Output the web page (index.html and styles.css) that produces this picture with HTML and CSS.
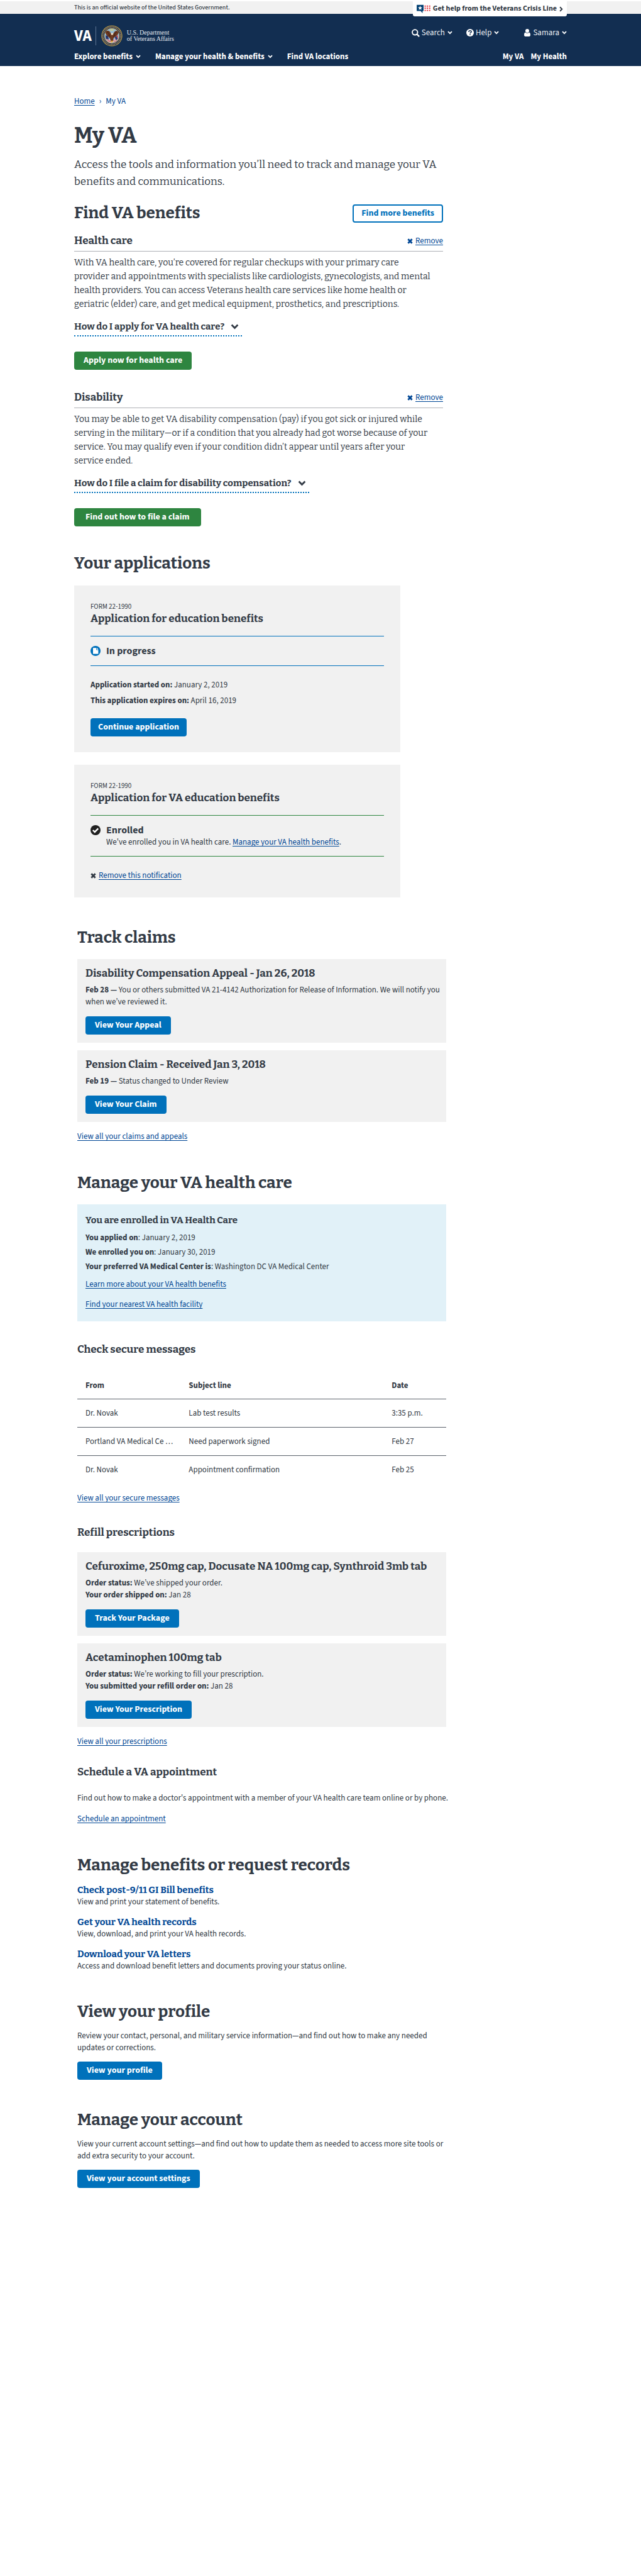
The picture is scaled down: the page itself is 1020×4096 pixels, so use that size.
FILE: index.html
```html
<!DOCTYPE html>
<html lang="en">
<head>
<meta charset="utf-8">
<meta name="viewport" content="width=device-width, initial-scale=1">
<title>My VA</title>
<link rel="stylesheet" href="styles.css">
</head>
<body>
<svg class="sprite" aria-hidden="true">
  <symbol id="chevron" viewBox="0 0 10 7"><path d="M1.200 1.200 5 5l3.800-3.800" fill="none" stroke="currentColor" stroke-width="2.200"/></symbol>
  <symbol id="times" viewBox="0 0 10 10"><path d="M1.500 1.500l7 7M8.500 1.500l-7 7" fill="none" stroke="currentColor" stroke-width="3.200"/></symbol>
</svg>

<div class="gov">
  <div class="wrap gov__inner">
    <span>This is an official website of the United States Government.</span>
    <a class="crisis" href="#crisis">
      <svg class="crisis__icon" viewBox="0 0 28 18" aria-hidden="true">
        <path d="M0 1h14v12.500h-2V18l-4-4.500H0z" fill="#003f72"/>
        <path d="M7 2.800l1.200 3.100 3.300.2-2.600 2.100.9 3.200L7 9.600l-2.800 1.800.9-3.200-2.600-2.100 3.300-.2z" fill="#fff"/>
        <path d="M16 2.200h2.600v2.600H16zm4.600 0h2.600v2.600h-2.600zm4.600 0h2.600v2.600h-2.600zM16 6.500h2.600v2.600H16zm4.600 0h2.600v2.600h-2.600zm4.600 0h2.600v2.600h-2.600zM16 10.800h2.600v2.600H16zm4.600 0h2.600v2.600h-2.600zm4.600 0h2.600v2.600h-2.600z" fill="#e0323c"/>
      </svg>
      Get help from the Veterans Crisis Line
      <svg class="crisis__arrow" viewBox="0 0 7 10" aria-hidden="true"><path d="M1.300 1.200 5 5 1.300 8.800" fill="none" stroke="currentColor" stroke-width="2.200"/></svg>
    </a>
  </div>
</div>

<header class="header">
  <div class="wrap">
    <div class="header__top">
      <a class="logo" href="#home">
        <span class="logo__va">VA</span>
        <svg class="logo__seal" viewBox="0 0 44 44" aria-hidden="true">
          <circle cx="22" cy="22" r="21.500" fill="#c9a545"/>
          <circle cx="22" cy="22" r="20" fill="#1c2a58"/>
          <circle cx="22" cy="22" r="18" fill="none" stroke="#c8a850" stroke-width="2" stroke-dasharray="1.800 1.300"/>
          <circle cx="22" cy="22" r="15.700" fill="#d4b04c"/>
          <circle cx="22" cy="22" r="14.800" fill="#8dbbe0"/>
          <path d="M9 21l5 1 2 9 4 4q-8-1-10.500-7.500z" fill="#28366b"/>
          <path d="M35 21l-5 1-2 9-4 4q8-1 10.500-7.500z" fill="#c9565c"/>
          <path d="M10 28l8 2 4 6q-8 1-12-8zM34 28l-7 1-4 6q8 0 11-7z" fill="#f0e4e4"/>
          <path d="M11 29l8 4M13 32l7 3M33 29l-8 3M32 32l-7 3" stroke="#bd3f4a" stroke-width="1.200"/>
          <path d="M31 22l3 6-3 3-3-6z" fill="#273a77"/>
          <path d="M8.500 14.500q1.500-3.500 6.500-3 3.500 1 5 6l2.500-2 2.500 2q2-5 5.500-6 4 0 5.500 3-1 6-7.500 9.500L25.500 27l-1 6h-5l-1-5-3-3.500Q9 20 8.500 14.500z" fill="#6b3a22"/>
          <path d="M12 14q4 2 6 7M32 14q-4 2-6 7M15 20l4 4M29 20l-4 4" stroke="#4a2415" stroke-width="1.300" fill="none"/>
          <path d="M20 17.500q2.500-3 5 0l-1 2.500h-3z" fill="#efe5cf"/>
          <path d="M19 32h6l-2 4h-2z" fill="#d9a441"/>
          <path d="M22 7.200l.8 1.600 1.700.2-1.200 1.200.3 1.700-1.600-.8-1.600.8.3-1.700L19.500 9l1.700-.2zM17.500 9.500h1.500V11h-1.500zm7.500 0h1.500V11H25zM18.500 12.500H20V14h-1.500zm5.500 0h1.500V14H24z" fill="#eed24e"/>
        </svg>
        <span class="logo__dept">U.S. Department<br>of Veterans Affairs</span>
      </a>
      <div class="tools">
        <button class="tool" type="button">
          <svg class="tool__icon" viewBox="0 0 13 13" aria-hidden="true"><circle cx="5.300" cy="5.300" r="4.200" fill="none" stroke="currentColor" stroke-width="1.900"/><path d="M8.500 8.500l3.600 3.600" stroke="currentColor" stroke-width="2.300"/></svg>
          Search <svg class="chev" aria-hidden="true"><use href="#chevron"/></svg>
        </button>
        <button class="tool" type="button">
          <svg class="tool__icon tool__icon--help" viewBox="0 0 12 12" aria-hidden="true"><circle cx="6" cy="6" r="6" fill="currentColor"/><path d="M3.900 4.700c.1-2.600 4.300-2.500 4.200-.1 0 1.400-2 1.300-2 2.700" fill="none" stroke="#122e51" stroke-width="1.600"/><path d="M5.200 8.200h1.700v1.600H5.200z" fill="#122e51"/></svg>
          Help <svg class="chev" aria-hidden="true"><use href="#chevron"/></svg>
        </button>
        <button class="tool tool--user" type="button">
          <svg class="tool__icon tool__icon--user" viewBox="0 0 10 12" aria-hidden="true"><circle cx="5" cy="3" r="3" fill="currentColor"/><path d="M2 5.500c1.500 1.600 4.500 1.600 6 0C9.600 6 10 7.800 10 9.500c0 1.500-.6 2.500-2 2.500H2c-1.400 0-2-1-2-2.500C0 7.800.4 6 2 5.500z" fill="currentColor"/></svg>
          Samara <svg class="chev" aria-hidden="true"><use href="#chevron"/></svg>
        </button>
      </div>
    </div>
    <nav class="nav" aria-label="Main">
      <button class="nav__item" type="button">Explore benefits <svg class="chev" aria-hidden="true"><use href="#chevron"/></svg></button>
      <button class="nav__item" type="button">Manage your health &amp; benefits <svg class="chev" aria-hidden="true"><use href="#chevron"/></svg></button>
      <a class="nav__item" href="#locations">Find VA locations</a>
      <div class="nav__mine"><a class="nav__item" href="#my-va">My VA</a><a class="nav__item" href="#my-health">My Health</a></div>
    </nav>
  </div>
</header>

<div class="wrap">
  <nav class="crumbs" aria-label="Breadcrumb"><a class="crumbs__home" href="#home">Home</a><span class="crumbs__sep">›</span><a class="crumbs__here" href="#my-va">My VA</a></nav>
  <main class="main">
    <h1>My VA</h1>
    <p class="intro">Access the tools and information you’ll need to track and manage your VA benefits and communications.</p>

    <section>
      <div class="titlebar">
        <h2>Find VA benefits</h2>
        <button class="btn btn--outline" type="button">Find more benefits</button>
      </div>
      <article class="benefit">
        <div class="benefit__head"><h3>Health care</h3><a class="remove" href="#remove-health"><svg class="x" aria-hidden="true"><use href="#times"/></svg><span class="link">Remove</span></a></div>
        <p class="benefit__text">With VA health care, you’re covered for regular checkups with your primary care<br>provider and appointments with specialists like cardiologists, gynecologists, and mental<br>health providers. You can access Veterans health care services like home health or<br>geriatric (elder) care, and get medical equipment, prosthetics, and prescriptions.</p>
        <button class="expander" type="button">How do I apply for VA health care? <svg class="expander__chev" aria-hidden="true"><use href="#chevron"/></svg></button>
        <button class="btn btn--green" type="button">Apply now for health care</button>
      </article>
      <article class="benefit">
        <div class="benefit__head"><h3>Disability</h3><a class="remove" href="#remove-disability"><svg class="x" aria-hidden="true"><use href="#times"/></svg><span class="link">Remove</span></a></div>
        <p class="benefit__text">You may be able to get VA disability compensation (pay) if you got sick or injured while<br>serving in the military—or if a condition that you already had got worse because of your<br>service. You may qualify even if your condition didn’t appear until years after your<br>service ended.</p>
        <button class="expander" type="button">How do I file a claim for disability compensation? <svg class="expander__chev" aria-hidden="true"><use href="#chevron"/></svg></button>
        <button class="btn btn--green btn--roomy" type="button">Find out how to file a claim</button>
      </article>
    </section>

    <section class="apps">
      <h2>Your applications</h2>
      <article class="app">
        <p class="app__form">FORM 22-1990</p>
        <h3>Application for education benefits</h3>
        <div class="status">
          <svg class="status__icon" viewBox="0 0 20 20" aria-hidden="true"><circle cx="10" cy="10" r="10" fill="#0071bb"/><path d="M5 4h6.500v4H15.500v8H5z" fill="#fff"/><path d="M12.500 3.800l3.200 3.300h-3.200z" fill="#fff"/></svg>
          <div><strong class="status__title">In progress</strong></div>
        </div>
        <p class="app__date"><strong>Application started on:</strong> January 2, 2019</p>
        <p class="app__date"><strong>This application expires on:</strong> April 16, 2019</p>
        <button class="btn btn--snug" type="button">Continue application</button>
      </article>
      <article class="app">
        <p class="app__form">FORM 22-1990</p>
        <h3>Application for VA education benefits</h3>
        <div class="status status--done">
          <svg class="status__icon" viewBox="0 0 20 20" aria-hidden="true"><circle cx="10" cy="10" r="10" fill="#212121"/><path d="M4.800 10l3.700 3.700 6.800-6.900" fill="none" stroke="#fff" stroke-width="3"/></svg>
          <div><strong class="status__title">Enrolled</strong><p class="status__text">We've enrolled you in VA health care. <a class="link" href="#manage">Manage your VA health benefits</a>.</p></div>
        </div>
        <a class="remove remove--dark" href="#remove-note"><svg class="x" aria-hidden="true"><use href="#times"/></svg><span class="link">Remove this notification</span></a>
      </article>
    </section>

    <section class="shifted">
      <h2>Track claims</h2>
      <article class="card">
        <h3>Disability Compensation Appeal - Jan 26, 2018</h3>
        <p class="card__text"><strong>Feb 28 —</strong> You or others submitted VA 21-4142 Authorization for Release of Information. We will notify you when we’ve reviewed it.</p>
        <button class="btn" type="button">View Your Appeal</button>
      </article>
      <article class="card">
        <h3>Pension Claim - Received Jan 3, 2018</h3>
        <p class="card__text"><strong>Feb 19 —</strong> Status changed to Under Review</p>
        <button class="btn" type="button">View Your Claim</button>
      </article>
      <p class="more"><a class="link" href="#claims">View all your claims and appeals</a></p>
    </section>

    <section class="shifted">
      <h2>Manage your VA health care</h2>
      <div class="enrolled">
        <h4>You are enrolled in VA Health Care</h4>
        <p><strong>You applied on</strong>: January 2, 2019</p>
        <p><strong>We enrolled you on</strong>: January 30, 2019</p>
        <p><strong>Your preferred VA Medical Center is</strong>: Washington DC VA Medical Center</p>
        <div class="enrolled__links">
          <a class="link" href="#learn">Learn more about your VA health benefits</a>
          <a class="link" href="#facility">Find your nearest VA health facility</a>
        </div>
      </div>

      <div class="block">
        <h3>Check secure messages</h3>
        <table class="messages">
          <thead><tr><th class="messages__from" scope="col">From</th><th class="messages__subject" scope="col">Subject line</th><th scope="col">Date</th></tr></thead>
          <tbody>
            <tr><td>Dr. Novak</td><td>Lab test results</td><td>3:35 p.m.</td></tr>
            <tr><td>Portland VA Medical Ce …</td><td>Need paperwork signed</td><td>Feb 27</td></tr>
            <tr><td>Dr. Novak</td><td>Appointment confirmation</td><td>Feb 25</td></tr>
          </tbody>
        </table>
        <p class="more"><a class="link" href="#messages">View all your secure messages</a></p>
      </div>

      <div class="block">
        <h3>Refill prescriptions</h3>
        <article class="card">
          <h3>Cefuroxime, 250mg cap, Docusate NA 100mg cap, Synthroid 3mb tab</h3>
          <p class="card__text"><strong>Order status:</strong> We’ve shipped your order.<br><strong>Your order shipped on:</strong> Jan 28</p>
          <button class="btn" type="button">Track Your Package</button>
        </article>
        <article class="card">
          <h3>Acetaminophen 100mg tab</h3>
          <p class="card__text"><strong>Order status:</strong> We’re working to fill your prescription.<br><strong>You submitted your refill order on:</strong> Jan 28</p>
          <button class="btn" type="button">View Your Prescription</button>
        </article>
        <p class="more"><a class="link" href="#prescriptions">View all your prescriptions</a></p>
      </div>

      <div class="block block--near">
        <h3>Schedule a VA appointment</h3>
        <p class="block__text">Find out how to make a doctor's appointment with a member of your VA health care team online or by phone.</p>
        <p class="more"><a class="link" href="#schedule">Schedule an appointment</a></p>
      </div>
    </section>

    <section class="shifted">
      <h2 class="tight">Manage benefits or request records</h2>
      <ul class="records">
        <li><a class="records__link" href="#gi-bill">Check post-9/11 GI Bill benefits</a><p>View and print your statement of benefits.</p></li>
        <li><a class="records__link" href="#records">Get your VA health records</a><p>View, download, and print your VA health records.</p></li>
        <li><a class="records__link" href="#letters">Download your VA letters</a><p>Access and download benefit letters and documents proving your status online.</p></li>
      </ul>
    </section>

    <section class="shifted">
      <h2 class="tight">View your profile</h2>
      <p class="blurb">Review your contact, personal, and military service information—and find out how to make any needed updates or corrections.</p>
      <button class="btn" type="button">View your profile</button>
    </section>

    <section class="shifted">
      <h2 class="tight">Manage your account</h2>
      <p class="blurb">View your current account settings—and find out how to update them as needed to access more site tools or add extra security to your account.</p>
      <button class="btn" type="button">View your account settings</button>
    </section>
  </main>
</div>
</body>
</html>
```
FILE: styles.css
```css
:root {
  --sans: "Source Sans 3", "Noto Sans CJK KR", "Open Sans", sans-serif;
  --slab: "Bitter", "DejaVu Serif Condensed", "DejaVu Serif", serif;
  --ink: #323a45;
  --navy: #122e51;
  --blue: #0071bb;
  --link: #004795;
  --green: #2e8540;
  --grey: #f1f1f1;
}

* { box-sizing: border-box; }

body {
  margin: 0;
  background: #fff;
  color: var(--ink);
  font: 13px/20px var(--sans);
}

h1, h2, h3, h4, p, ul { margin: 0; padding: 0; }
ul { list-style: none; }
h1, h2, h3, h4 { font-family: var(--slab); font-weight: 700; }
h1 { font-size: 34px; line-height: 40px; }
h2 { font-size: 26px; line-height: 30px; }
h3 { font-size: 17px; line-height: 22px; }
h4 { font-size: 15px; line-height: 20px; }

button { margin: 0; padding: 0; border: 0; background: none; color: inherit; font: inherit; cursor: pointer; }
a { color: inherit; text-decoration: none; }

.sprite { display: none; }
.wrap { max-width: 784px; margin: 0 auto; }
.link { color: var(--link); text-decoration: underline; text-decoration-thickness: 1px; text-underline-offset: 2px; text-decoration-skip-ink: none; }

/* Government banner */
.gov { border-top: 2px solid #fff; background: var(--grey); font-size: 10px; font-weight: 500; }
.gov__inner { position: relative; }
.crisis {
  position: absolute; top: 0; right: 0;
  display: flex; align-items: center;
  height: 24px; padding: 0 6px;
  border-radius: 0 0 3px 3px; background: #fff;
  font-size: 12px; font-weight: 700;
}
.crisis__icon { width: 22px; height: 14px; margin-right: 4px; }
.crisis__arrow { width: 6px; height: 9px; margin-left: 4px; }

/* Site header */
.header { background: var(--navy); color: #fff; padding: 18px 0 5px; }
.header__top { display: flex; justify-content: space-between; align-items: flex-start; }
.logo { display: flex; align-items: center; height: 34px; }
.logo__va { padding-right: 6px; border-right: 1px solid #5c7393; font-size: 25px; font-weight: 700; line-height: 30px; }
.logo__seal { width: 34px; height: 34px; margin: 0 7px 0 8px; }
.logo__dept { font: 10px/10px "Liberation Serif", serif; color: #e6eaf0; }
.tools { display: flex; gap: 22px; padding-top: 2px; }
.tool { display: flex; align-items: center; color: #e9edf2; }
.tool .chev { margin-left: 4px; }
.tool--user { margin-left: 18px; }
.tool__icon { width: 13px; height: 13px; margin-right: 3px; color: #fff; }
.tool__icon--help { width: 12px; height: 12px; }
.tool__icon--user { width: 10px; height: 12px; margin-right: 4px; }
.chev { width: 8px; height: 6px; margin-left: 5px; color: #fff; }
.nav { display: flex; gap: 23px; margin-top: 6px; font-weight: 700; }
.nav__item { display: flex; align-items: center; }
.nav__mine { display: flex; gap: 11px; margin-left: auto; }

/* Breadcrumb and page column */
.crumbs { display: flex; gap: 7px; padding: 46px 0 25px; color: var(--link); }
.crumbs__home { text-decoration: underline; text-underline-offset: 2px; }
.main { max-width: 587px; padding-bottom: 48px; }
.intro { margin-top: 12px; font: 17px/27px var(--slab); }

/* Buttons */
.btn {
  display: block; height: 29px; padding: 0 15px;
  border-radius: 4px; background: var(--blue); color: #fff;
  font-size: 14px; font-weight: 700; line-height: 29px;
}
.btn--outline { padding: 0 12px; border: 2px solid var(--blue); background: #fff; color: var(--blue); line-height: 25px; }
.btn--green { background: var(--green); }
.btn--roomy { padding: 0 18px; }
.btn--snug { padding: 0 12px; }

/* Find VA benefits */
.titlebar { display: flex; justify-content: space-between; align-items: center; margin-top: 22px; }
.benefit { margin-top: 18px; }
.benefit + .benefit { margin-top: 33px; }
.benefit__head { display: flex; justify-content: space-between; align-items: center; padding-bottom: 5px; border-bottom: 1px solid #aeb0b5; }
.benefit__text { margin-top: 7px; font: 14px/22px var(--slab); }
.expander {
  display: flex; align-items: center; gap: 10px;
  margin: 14px 0 24px; padding: 0 5px 4px 0;
  border-bottom: 2px dotted var(--blue);
  font: 700 15px/20px var(--slab);
}
.expander__chev { width: 13px; height: 9px; }
.remove { display: flex; align-items: center; color: var(--link); }
.remove--dark { color: var(--ink); }
.x { width: 9px; height: 9px; margin-right: 4px; }

/* Applications */
.apps { margin-top: 44px; }
.app { max-width: 519px; margin-top: 20px; padding: 26px 26px 25px; background: var(--grey); }
.app__form { font-size: 11px; line-height: 16px; }
.status {
  display: flex; gap: 9px;
  margin: 16px 0 20px; padding: 13px 0;
  border-top: 1px solid var(--blue); border-bottom: 1px solid var(--blue);
}
.status--done { border-color: var(--green); }
.status__icon { flex: none; width: 16px; height: 16px; margin-top: 2px; }
.status__title { display: block; font-size: 16px; line-height: 20px; }
.status__text { line-height: 18px; }
.app__date { margin-bottom: 5px; }
.app .btn { margin-top: 18px; }

/* Claims, prescriptions */
.shifted { margin: 49px -5px 0 5px; }
.shifted > h2 { margin-bottom: 19px; }
.shifted > .tight { margin-bottom: 14px; }
.card { padding: 12px 8px 13px 13px; background: var(--grey); }
.card + .card { margin-top: 12px; }
.card__text { margin: 6px 0 13px; line-height: 19px; }
.more { margin-top: 13px; }

/* Enrollment summary */
.enrolled { padding: 15px 13px 17px; background: #e1f1f8; }
.enrolled h4 { margin-bottom: 7px; }
.enrolled p { line-height: 23px; }
.enrolled__links { display: flex; flex-direction: column; align-items: flex-start; gap: 12px; margin-top: 6px; }

/* Health care blocks */
.block { margin-top: 34px; }
.block--near { margin-top: 28px; }
.block > h3 { margin-bottom: 20px; }
.block__text { white-space: nowrap; }
.messages { width: 100%; margin-top: 22px; border-collapse: collapse; table-layout: fixed; }
.messages__from { width: 28%; }
.messages__subject { width: 55%; }
.messages th, .messages td { height: 45px; padding: 0 0 0 13px; text-align: left; }
.messages th { padding-top: 3px; }
.messages tr { border-bottom: 1px solid #5b616b; }
.messages tbody tr:last-child { border-bottom: 0; }

/* Records and account */
.records { display: grid; gap: 13px; }
.records__link { display: block; color: var(--link); font: 700 15px/20px var(--slab); }
.records p { line-height: 18px; }
.blurb { margin-bottom: 12px; line-height: 19px; }
```
